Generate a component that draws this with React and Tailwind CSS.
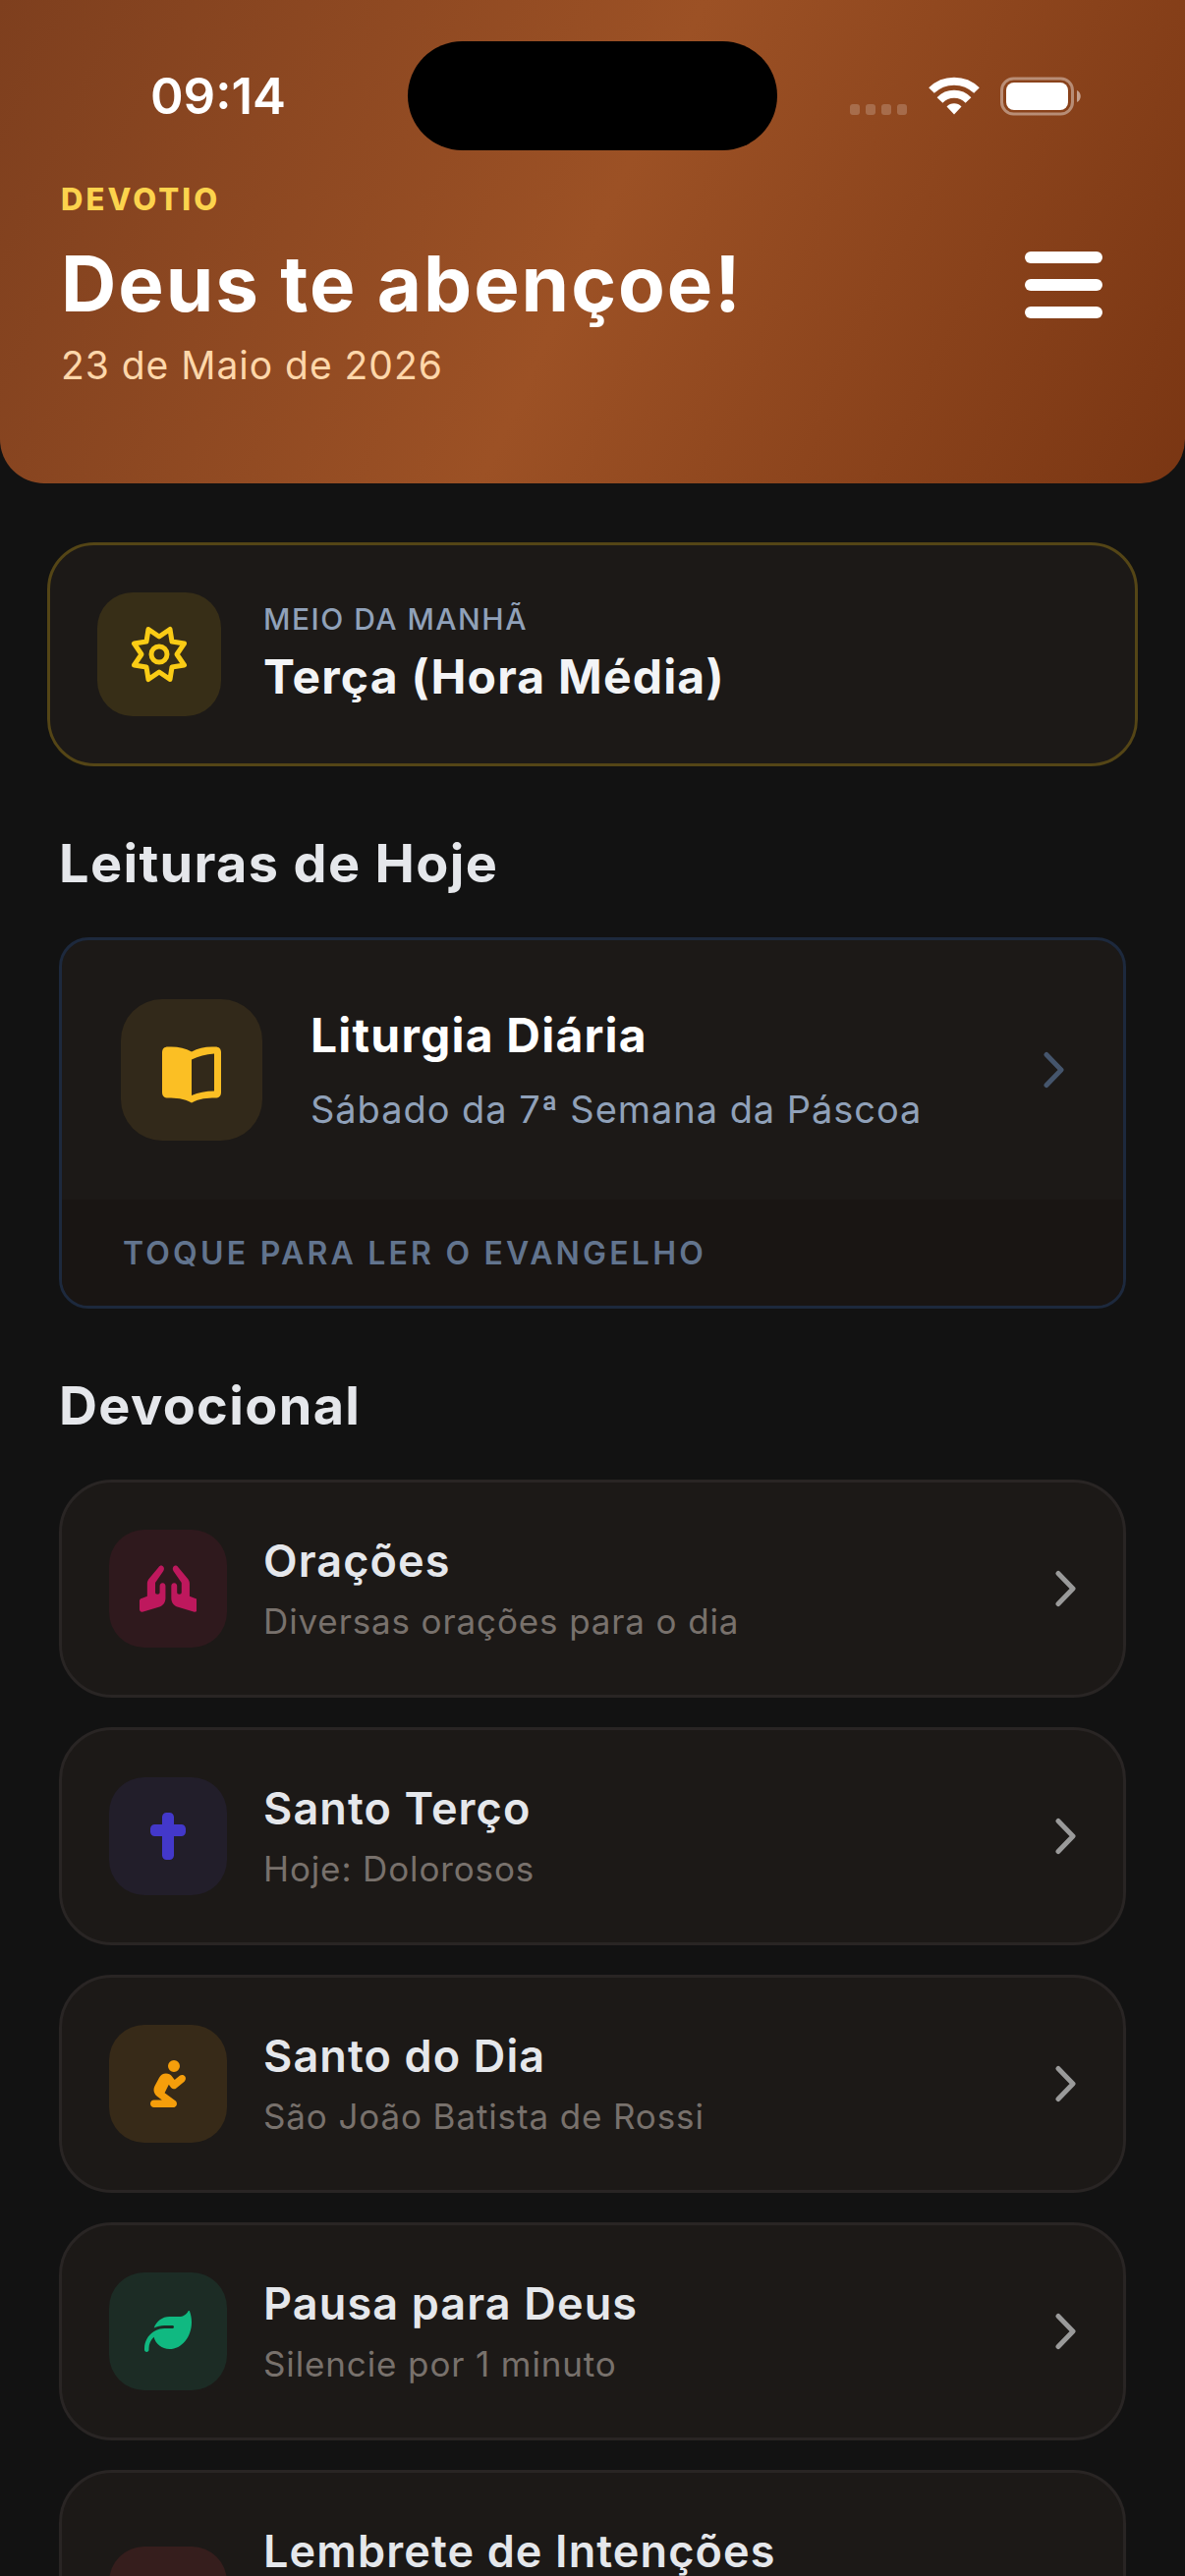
import { FaBell, FaCross, FaLeaf, FaPersonPraying } from 'react-icons/fa6'

const devotions = [
  { title: 'Orações', subtitle: 'Diversas orações para o dia', Icon: HandsIcon, tile: 'bg-[#2f191d]', color: 'text-[#be185d]' },
  { title: 'Santo Terço', subtitle: 'Hoje: Dolorosos', Icon: FaCross, tile: 'bg-[#221e2a]', color: 'text-[#4338ca]' },
  { title: 'Santo do Dia', subtitle: 'São João Batista de Rossi', Icon: FaPersonPraying, tile: 'bg-[#372a18]', color: 'text-[#f59e0b]' },
  { title: 'Pausa para Deus', subtitle: 'Silencie por 1 minuto', Icon: FaLeaf, tile: 'bg-[#1c2c25]', color: 'text-[#10b981]' },
  {
    title: 'Lembrete de Intenções',
    subtitle: 'Anote suas intenções e receba um lembrete para rezar por elas',
    Icon: FaBell,
    tile: 'bg-[#361e1d]',
    color: 'text-[#ef4444]',
  },
]

function HandsIcon({ className }) {
  const hand =
    'M60 6 30 42C26 47 24 52 24 58V97L6 104C2 105 0 108 0 112V138C0 143 4 147 9 146L60 131C73 127 81 116 81 103V66C81 60 78 56 72 56S63 60 63 66V84C63 88 61 91 56 91S49 88 49 84V55L74 19C78 13 77 6 72 3S63 2 60 6Z'
  return (
    <svg aria-hidden="true" className={className} fill="currentColor" viewBox="0 0 180 147">
      <path d={hand} />
      <path d={hand} transform="matrix(-1 0 0 1 180 0)" />
    </svg>
  )
}

function Chevron({ className }) {
  return (
    <svg aria-hidden="true" className={`h-[42px] w-[21px] shrink-0 ${className}`} fill="none" viewBox="0 0 21 42">
      <path d="M3 5.5 18 21 3 36.5" stroke="currentColor" strokeLinecap="round" strokeLinejoin="round" strokeWidth="5" />
    </svg>
  )
}

function SunIcon() {
  return (
    <svg aria-hidden="true" className="h-[60px] w-[60px] text-[#facc15]" fill="none" stroke="currentColor" strokeLinejoin="round" strokeWidth="5" viewBox="0 0 60 60">
      <path d="M30 12 41 4.5 43 17 55.5 19 48 30 55.5 41 43 43 41 55.5 30 48 19 55.5 17 43 4.5 41 12 30 4.5 19 17 17 19 4.5Z" />
      <circle cx="30" cy="30" r="8" />
    </svg>
  )
}

function BookIcon() {
  return (
    <svg aria-hidden="true" className="h-[72px] w-[72px] text-[#fbbf24]" fill="currentColor" viewBox="-6 -11 72 72">
      <path
        clipRule="evenodd"
        d="M6 1.5C15 1 23 2.5 30 6.5 37 2.500 45 1 54 1.5 58 1.5 60 3.5 60 7.5V47.5C60 51.5 58 53.5 54 53.5 46 53.5 38 54 30 58.5 22 54 14 53.5 6 53.5 2 53.5 0 51.5 0 47.5V7.5C0 3.5 2 1.5 6 1.5ZM53 8.5C44 9 37 11 30 14.5V51C37 48 44 46.5 53 46.5Z"
        fillRule="evenodd"
      />
    </svg>
  )
}

function StatusBar() {
  return (
    <div className="grid h-[111px] grid-cols-[1fr_376px_1fr] items-center text-white">
      <time className="pl-[29px] text-center text-[51px] leading-[60px] font-semibold">09:14</time>
      <div className="h-[111px] rounded-full bg-black" />
      <div className="flex items-center pl-[74px]">
        <div className="flex gap-[6px] pt-[27px]">
          {[0, 1, 2, 3].map((dot) => (
            <span key={dot} className="h-[11px] w-[10px] rounded-[3px] bg-white/20" />
          ))}
        </div>
        <svg aria-label="Wi-Fi" className="ml-[22px] h-[42px] w-[52px]" fill="none" role="img" stroke="white" viewBox="0 -2 52 42">
          <path d="M3 13A33 33 0 0 1 49 13" strokeWidth="8" />
          <path d="M11.5 23A20 20 0 0 1 40.5 23" strokeWidth="8" />
          <path d="M26 37.5 18.5 29.5A10.5 10.5 0 0 1 33.5 29.5Z" fill="white" stroke="none" />
        </svg>
        <svg aria-label="Bateria" className="ml-[21px] h-[40px] w-[83px]" role="img" viewBox="0 0 83 40">
          <rect fill="none" height="36" opacity=".4" rx="12" stroke="white" strokeWidth="3" width="72" x="1.5" y="2" />
          <rect fill="white" height="28" rx="8" width="63" x="6" y="6" />
          <path d="M78 14C83 16 83 24 78 26Z" fill="white" opacity=".5" />
        </svg>
      </div>
    </div>
  )
}

function DevotionRow({ title, subtitle, Icon, tile, color }) {
  return (
    <li>
      <button className="flex w-full items-center rounded-[54px] border-[3px] border-[#292524] bg-[#1c1917] p-[48px] text-left" type="button">
        <span className={`flex h-[120px] w-[120px] shrink-0 items-center justify-center rounded-[36px] ${tile}`}>
          <Icon className={`h-[48px] w-auto ${color}`} />
        </span>
        <span className="mr-[36px] ml-[37px] flex flex-1 flex-col gap-[4px] pt-[2px]">
          <span className="text-[45px] leading-[60px] font-semibold tracking-wide text-gray-200">{title}</span>
          <span className="text-[35px] leading-[54px] tracking-wide text-[#78716c]">{subtitle}</span>
        </span>
        <Chevron className="text-[#9a9a9a]" />
      </button>
    </li>
  )
}

export default function App() {
  return (
    <div className="h-screen overflow-y-auto bg-[#121212] font-['Inter',sans-serif] [scrollbar-width:none]">
      <header className="rounded-b-[45px] bg-[linear-gradient(115deg,#7e3f1e_0%,#9c5125_50%,#7a3613_100%)] pt-[42px] pb-[95px]">
        <StatusBar />
        <div className="flex items-center justify-between pt-[30px] pr-[84px] pl-[62px]">
          <div>
            <p className="text-[31px] leading-[40px] font-extrabold tracking-widest text-[#fcd34d]">DEVOTIO</p>
            <h1 className="mt-[18px] text-[78px] leading-[96px] font-bold tracking-wide text-white">Deus te abençoe!</h1>
            <p className="mt-[10px] text-[39px] leading-[50px] tracking-wide text-[#fed7aa]">23 de Maio de 2026</p>
          </div>
          <button aria-label="Abrir menu" className="flex w-[79px] flex-col gap-[16px]" type="button">
            <span className="h-[12px] w-full rounded-full bg-white" />
            <span className="h-[12px] w-full rounded-full bg-white" />
            <span className="h-[12px] w-full rounded-full bg-white" />
          </button>
        </div>
      </header>

      <main className="px-[60px] pt-[60px] pb-[60px]">
        <button className="-mx-[12px] flex w-[calc(100%+24px)] items-center rounded-[48px] border-[3px] border-[#544516] bg-[#1c1917] p-[48px] text-left" type="button">
          <span className="flex h-[126px] w-[126px] shrink-0 items-center justify-center rounded-[36px] bg-[#372e17]">
            <SunIcon />
          </span>
          <span className="ml-[43px] flex flex-col gap-[9px] pb-[4px]">
            <span className="text-[30px] leading-[40px] font-medium tracking-wider text-slate-400">MEIO DA MANHÃ</span>
            <span className="text-[48px] leading-[60px] font-bold tracking-wide text-gray-100">Terça (Hora Média)</span>
          </span>
        </button>

        <section>
          <h2 className="mt-[66px] text-[54px] leading-[66px] font-bold tracking-wide text-gray-200">Leituras de Hoje</h2>
          <button className="mt-[42px] block w-full overflow-hidden rounded-[30px] border-[3px] border-slate-800 bg-[#1c1917] text-left" type="button">
            <span className="flex items-center p-[60px]">
              <span className="flex h-[144px] w-[144px] shrink-0 items-center justify-center rounded-[42px] bg-[#32291a]">
                <BookIcon />
              </span>
              <span className="ml-[49px] flex flex-1 flex-col gap-[20px]">
                <span className="text-[48px] leading-[60px] font-bold tracking-wide text-white">Liturgia Diária</span>
                <span className="text-[38px] leading-[50px] tracking-wide text-slate-400">Sábado da 7ª Semana da Páscoa</span>
              </span>
              <Chevron className="text-slate-600" />
            </span>
            <span className="block bg-[#191513] px-[62px] pt-[34px] pb-[32px] text-[32px] leading-[42px] font-semibold tracking-widest text-slate-500">
              TOQUE PARA LER O EVANGELHO
            </span>
          </button>
        </section>

        <section>
          <h2 className="mt-[66px] text-[54px] leading-[66px] font-bold tracking-wide text-gray-200">Devocional</h2>
          <ul className="mt-[42px] flex flex-col gap-[30px]">
            {devotions.map((item) => (
              <DevotionRow key={item.title} {...item} />
            ))}
          </ul>
        </section>
      </main>
    </div>
  )
}
